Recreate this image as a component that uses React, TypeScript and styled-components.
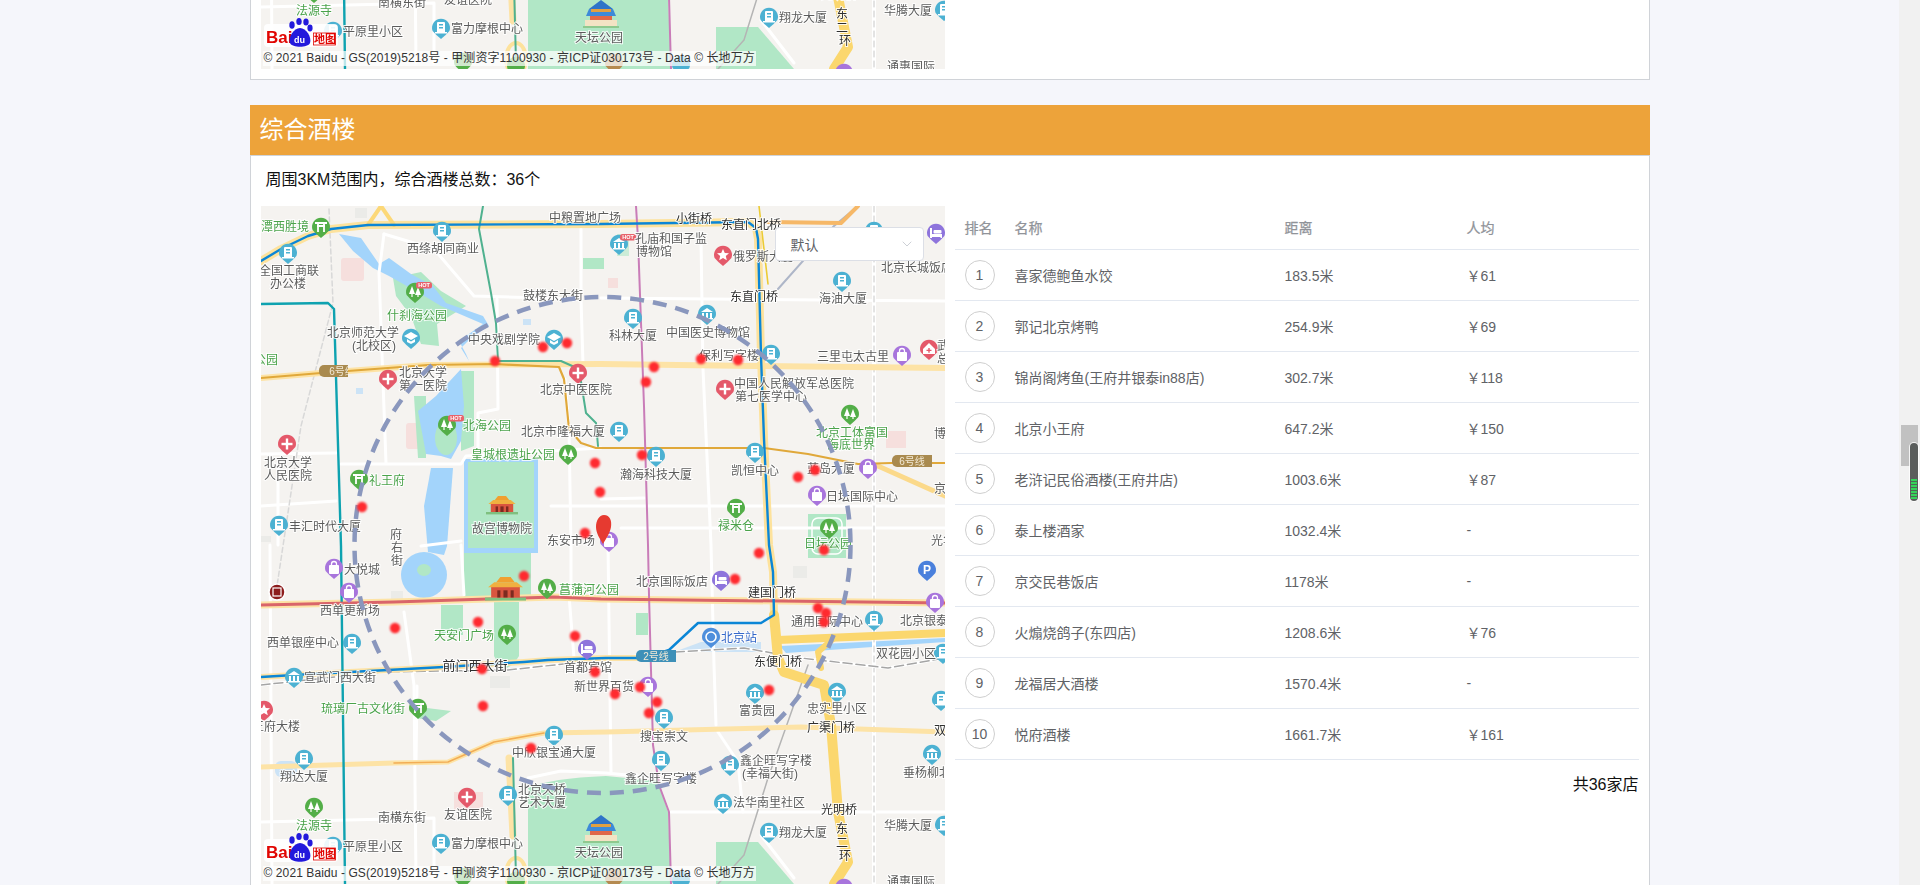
import React from "react";
import styled, { createGlobalStyle } from "styled-components";
import { ChevronDown } from "lucide-react";

const FONT = `"Liberation Sans", "Noto Sans CJK SC", sans-serif`;

const GlobalStyle = createGlobalStyle`
  html, body { margin: 0; padding: 0; height: 100%; overflow: hidden; background: #f5f6fb; }
  body { font-family: ${FONT}; }
`;

const Screen = styled.div`
  width: 1920px;
  height: 885px;
  display: flex;
  overflow: hidden;
  position: relative;
`;

const Content = styled.div`
  flex: 1;
  display: flex;
  flex-direction: column;
  align-items: center;
  min-width: 0;
`;

const Scrollbar = styled.div`
  width: 21px;
  flex: none;
  background: #f1f1f1;
  padding: 425px 2px 0;
  box-sizing: border-box;
`;

const ScrollThumb = styled.div`
  width: 17px;
  height: 41px;
  background: #c1c1c1;
`;

const MeterWidget = styled.div`
  position: absolute;
  left: 1910px;
  top: 443px;
  width: 8px;
  height: 58px;
  box-sizing: border-box;
  padding: 36px 1px 2px;
  border-radius: 4px;
  background: #5a5d5c;
  box-shadow: 0 0 0 1px rgba(255, 255, 255, 0.8);
`;

const MeterBars = styled.div`
  height: 100%;
  background: repeating-linear-gradient(#35d45a 0 2px, #4d6a55 2px 3px);
`;

const TopCard = styled.section`
  width: 1400px;
  height: 80px;
  box-sizing: border-box;
  flex: none;
  padding: 0 10px 10px;
  background: #fff;
  border: 1px solid #d0d3d8;
  border-top: 0;
  margin-bottom: 25px;
`;

const MapClip = styled.div`
  width: 684px;
  height: 69px;
  display: flex;
  flex-direction: column;
  justify-content: flex-end;
  overflow: hidden;
`;

const SectionTitle = styled.h2`
  width: 1400px;
  height: 50px;
  flex: none;
  margin: 0;
  padding-left: 10px;
  box-sizing: border-box;
  background: #eda33a;
  color: #fff;
  font-size: 24px;
  font-weight: 400;
  line-height: 50px;
`;

const Card = styled.section`
  width: 1400px;
  flex: none;
  box-sizing: border-box;
  padding: 0 10px 10px;
  background: #fff;
  border: 1px solid #d0d3d8;
`;

const Summary = styled.p`
  margin: 0;
  height: 50px;
  padding-left: 5px;
  font-size: 16px;
  line-height: 48px;
  color: #111;
`;

const Columns = styled.div`
  display: flex;
  gap: 10px;
  align-items: flex-start;
`;

const MapBox = styled.div`
  position: relative;
  width: 684px;
  height: 678px;
  flex: none;
  overflow: hidden;
  background: #f5f3f0;
`;

const MapSvg = styled.svg`
  display: block;
  width: 684px;
  height: 678px;
  font-family: ${FONT};
  filter: blur(0.3px);
`;

const Copyright = styled.div`
  position: absolute;
  left: 2px;
  bottom: 3px;
  padding: 0 1px;
  font-size: 12px;
  line-height: 15px;
  letter-spacing: 0.09px;
  color: #333;
  white-space: nowrap;
  background: rgba(255, 255, 255, 0.72);
`;

const SelectBox = styled.div`
  position: absolute;
  left: 514px;
  top: 21px;
  width: 149px;
  height: 34px;
  box-sizing: border-box;
  padding: 0 8px 0 15px;
  display: flex;
  align-items: center;
  justify-content: space-between;
  background: #fff;
  border: 1px solid #dcdfe6;
  border-radius: 4px;
  color: #606266;
  font-size: 14px;
`;

const TablePane = styled.div`
  flex: 1;
  min-width: 0;
`;

const RankTable = styled.table`
  width: 100%;
  border-collapse: collapse;
  table-layout: fixed;
  font-size: 14px;
  color: #606266;
`;

const HeadCell = styled.th<{ $width: number }>`
  width: ${(p) => p.$width}px;
  height: 43px;
  padding: 0 0 0 10px;
  box-sizing: border-box;
  text-align: left;
  font-weight: 400;
  color: #909399;
  -webkit-text-stroke: 0.25px #909399;
  border-bottom: 1px solid #e3e8f0;
`;

const Cell = styled.td`
  height: 51px;
  padding: 0 0 0 10px;
  box-sizing: border-box;
  border-bottom: 1px solid #e3e8f0;
`;

const RankBadge = styled.span`
  display: flex;
  width: 30px;
  height: 30px;
  box-sizing: border-box;
  align-items: center;
  justify-content: center;
  border: 1px solid #cfcfcf;
  border-radius: 50%;
`;

const TableFoot = styled.div`
  text-align: right;
  font-size: 16px;
  line-height: 20px;
  padding-top: 15px;
  color: #111;
`;

const LABEL_TONES = {
  grey: "#5b5b5b",
  road: "#2f2f2f",
  green: "#4aa24a",
  blue: "#3568c9",
};

const MapLabel = styled.text<{ $tone: keyof typeof LABEL_TONES; $size?: number }>`
  font-size: ${(p) => p.$size ?? 12}px;
  fill: ${(p) => LABEL_TONES[p.$tone]};
  stroke: rgba(255, 255, 255, 0.85);
  stroke-width: 2px;
  paint-order: stroke;
  dominant-baseline: central;
`;

const BadgeText = styled.text`
  font-size: 10px;
  fill: #f3ead6;
  text-anchor: middle;
  dominant-baseline: central;
`;

const HotText = styled.text`
  font-size: 5.5px;
  font-weight: 700;
  fill: #fff;
  text-anchor: middle;
  dominant-baseline: central;
`;

const PinText = styled.text`
  font-size: 12px;
  font-weight: 700;
  fill: #fff;
  text-anchor: middle;
  dominant-baseline: central;
`;

const Dot = styled.circle`
  fill: #ff2a2f;
  filter: blur(0.8px);
`;

const LogoRed = styled.text`
  font-size: 17px;
  font-weight: 700;
  fill: #e10602;
  stroke: #fff;
  stroke-width: 2px;
  paint-order: stroke;
`;

const LogoDu = styled.text`
  font-size: 9px;
  font-weight: 700;
  fill: #fff;
`;

const LogoMap = styled.text`
  font-size: 11px;
  font-weight: 700;
  fill: #e10602;
`;

type PinKind =
  | "building" | "museum" | "school" | "gate" | "tree" | "cross" | "star"
  | "home" | "bag" | "bed" | "park" | "plain" | "green" | "purple" | "brown";

const PIN_COLORS: Record<PinKind, string> = {
  building: "#4cb1d2",
  museum: "#4cb1d2",
  school: "#4cb1d2",
  plain: "#4cb1d2",
  gate: "#53ae48",
  tree: "#53ae48",
  park: "#53ae48",
  green: "#53ae48",
  cross: "#e4596a",
  star: "#e4596a",
  home: "#e4596a",
  bag: "#a875dc",
  bed: "#8e74dc",
  purple: "#a875dc",
  brown: "#b58a50",
};

const PinGlyph = ({ kind, x, y }: { kind: PinKind; x: number; y: number }) => {
  const t = `translate(${x} ${y})`;
  switch (kind) {
    case "building":
      return (
        <g transform={t} fill="#fff">
          <rect x={-4} y={-6} width={8} height={11} rx={1} />
          <rect x={-2} y={-4} width={4} height={1.5} fill="#4cb1d2" />
          <rect x={-2} y={-1} width={4} height={1.5} fill="#4cb1d2" />
          <rect x={-6} y={4} width={12} height={1.5} />
        </g>
      );
    case "museum":
      return (
        <g transform={t} fill="#fff">
          <path d="M-6 -2 L0 -6 L6 -2 Z" />
          <rect x={-5} y={-1} width={2} height={5} />
          <rect x={-1} y={-1} width={2} height={5} />
          <rect x={3} y={-1} width={2} height={5} />
          <rect x={-6} y={4} width={12} height={1.5} />
        </g>
      );
    case "school":
      return (
        <g transform={t} fill="#fff">
          <path d="M-7 -2 L0 -6 L7 -2 L0 2 Z" />
          <path d="M-4 1 L0 3.5 L4 1 L4 4 L0 6 L-4 4 Z" />
        </g>
      );
    case "gate":
      return (
        <g transform={t} fill="none" stroke="#fff" strokeWidth={1.8}>
          <path d="M-6 -4 H6 M-4 -1 H4 M-3 -4 V5 M3 -4 V5" />
        </g>
      );
    case "tree":
    case "park":
      return (
        <g transform={t} fill="#fff">
          <path d="M-3 -6 L0 2 H-6 Z" />
          <path d="M3 -5 L6 3 H0 Z" />
          <rect x={-3.6} y={2} width={1.2} height={3} />
          <rect x={2.4} y={3} width={1.2} height={2} />
        </g>
      );
    case "cross":
      return (
        <g transform={t} fill="#fff">
          <rect x={-5.5} y={-1.2} width={11} height={2.4} />
          <rect x={-1.2} y={-5.5} width={2.4} height={11} />
        </g>
      );
    case "star":
      return (
        <path
          transform={t}
          fill="#fff"
          d="M0 -6 L1.8 -2 L6 -1.7 L2.8 1 L3.8 5.2 L0 3 L-3.8 5.2 L-2.8 1 L-6 -1.7 L-1.8 -2 Z"
        />
      );
    case "home":
      return (
        <g transform={t}>
          <path fill="#fff" d="M-6 0 L0 -6 L6 0 V5 H-6 Z" />
          <path fill="#e4596a" d="M-2.5 0.7 H2.5 V2 H-2.5 Z M-0.7 -1 H0.7 V3.8 H-0.7 Z" />
        </g>
      );
    case "bag":
      return (
        <g transform={t}>
          <rect x={-5} y={-3} width={10} height={9} rx={1} fill="#fff" />
          <path d="M-2.5 -2 V-4 A2.5 2.5 0 0 1 2.5 -4 V-2" fill="none" stroke="#fff" strokeWidth={1.3} />
        </g>
      );
    case "bed":
      return (
        <g transform={t} fill="#fff">
          <rect x={-6} y={-5} width={2} height={10} />
          <rect x={-4} y={1} width={10} height={3} />
          <rect x={-2.5} y={-3} width={8} height={3.5} rx={1} />
          <rect x={4.5} y={3} width={1.5} height={2} />
        </g>
      );
    default:
      return null;
  }
};

const Pin = ({ kind, x, y, fill, hot }: { kind: PinKind; x: number; y: number; fill?: string; hot?: boolean }) => (
  <g>
    <path
      fill={fill ?? PIN_COLORS[kind]}
      d={`M${x - 8.4} ${y + 3} A9 9 0 1 1 ${x + 8.4} ${y + 3} Q${x + 5} ${y + 7} ${x} ${y + 11} Q${x - 5} ${y + 7} ${x - 8.4} ${y + 3} Z`}
    />
    <PinGlyph kind={kind} x={x} y={y} />
    {hot && (
      <g>
        <rect x={x + 1} y={y - 10} width={16} height={6.5} rx={2.5} fill="#e8626c" />
        <HotText x={x + 9} y={y - 6.6}>HOT</HotText>
      </g>
    )}
  </g>
);

const PINS: [PinKind, number, number, boolean?][] = [
  ["building", 27, 47], ["building", 181, 25], ["building", 18, 319], ["museum", 358, 38, true],
  ["building", 372, 112], ["museum", 446, 108], ["building", 510, 148], ["building", 581, 75],
  ["building", 358, 225], ["building", 395, 250], ["building", 494, 246], ["building", 613, 25],
  ["school", 150, 132], ["school", 293, 133],
  ["building", 91, 437], ["museum", 33, 471], ["building", 43, 553], ["building", 180, 637],
  ["building", 72, 640], ["building", 293, 529], ["building", 247, 589], ["building", 613, 414],
  ["building", 680, 494], ["museum", 494, 487], ["museum", 576, 486], ["building", 403, 512],
  ["building", 400, 554], ["building", 469, 559], ["museum", 671, 548], ["museum", 462, 597],
  ["building", 508, 626], ["building", 683, 619], ["building", 682, 447],
  ["green", 202, 671], ["plain", 420, 674], ["brown", 353, 672], ["purple", 583, 682], ["green", 255, 675],
  ["gate", 60, 21], ["tree", 154, 86, true], ["tree", 186, 219, true], ["park", 307, 248],
  ["gate", 98, 273], ["gate", 475, 302], ["park", 589, 208], ["park", 568, 322],
  ["park", 286, 382], ["park", 246, 428], ["gate", 157, 502], ["tree", 53, 601],
  ["cross", 127, 173], ["cross", 26, 238], ["cross", 317, 167], ["star", 462, 49],
  ["cross", 464, 183], ["home", 668, 143], ["cross", 206, 591], ["star", 3, 504],
  ["bed", 675, 27], ["bag", 641, 149], ["bag", 607, 262], ["bag", 556, 289], ["bag", 348, 335],
  ["bag", 73, 362], ["bag", 88, 386], ["bed", 326, 443], ["bed", 460, 374], ["bag", 674, 396],
  ["bag", 387, 480],
];

type Tone = keyof typeof LABEL_TONES;
type LabelRow = [string, number, number, Tone?, "start" | "middle" | "end"?, number?];

const LABELS: LabelRow[] = [
  ["潭西胜境", 24, 21, "green"], ["全国工商联", 28, 65], ["办公楼", 27, 78], ["西绦胡同商业", 182, 43],
  ["什刹海公园", 156, 110, "green"], ["北京师范大学", 102, 127], ["(北校区)", 113, 140],
  ["中央戏剧学院", 243, 134], ["鼓楼东大街", 292, 90], ["公园", 5, 154, "green"],
  ["北京大学", 162, 167], ["第一医院", 162, 180], ["北京中医医院", 315, 184],
  ["北海公园", 226, 220, "green"], ["北京市隆福大厦", 302, 226], ["皇城根遗址公园", 252, 249, "green"],
  ["北京大学", 27, 257], ["人民医院", 27, 270], ["礼王府", 126, 275, "green"],
  ["丰汇时代大厦", 64, 321], ["故宫博物院", 241, 323], ["府", 135, 329], ["右", 136, 342],
  ["街", 136, 355], ["东安市场", 310, 335],
  ["中粮置地广场", 324, 12], ["小街桥", 433, 13, "road"], ["东直门北桥", 490, 19, "road"],
  ["孔庙和国子监", 410, 33], ["博物馆", 393, 46], ["俄罗斯大厦", 472, 51, "grey", "start"],
  ["北京长城饭店", 620, 62, "grey", "start"], ["东直门桥", 493, 91, "road"], ["海油大厦", 582, 93],
  ["科林大厦", 372, 130], ["中国医史博物馆", 447, 127], ["保利写字楼", 468, 150],
  ["三里屯太古里", 592, 151], ["武警", 676, 140, "grey", "start"], ["总医院", 676, 153, "grey", "start"],
  ["中国人民解放军总医院", 533, 178], ["第七医学中心", 510, 191],
  ["北京工体富国", 591, 227, "green"], ["海底世界", 590, 239, "green"], ["博物馆", 673, 228, "grey", "start"],
  ["瀚海科技大厦", 395, 269], ["凯恒中心", 494, 265], ["蓝岛大厦", 570, 263],
  ["京广", 673, 283, "grey", "start"], ["日坛国际中心", 601, 291], ["禄米仓", 475, 320, "green"],
  ["日坛公园", 567, 338, "green"], ["光华", 670, 335, "grey", "start"],
  ["大悦城", 101, 364], ["西单更新场", 89, 405], ["菖蒲河公园", 328, 384, "green"],
  ["西单银座中心", 42, 437], ["天安门广场", 203, 430, "green"], ["前门西大街", 214, 459, "road", "middle", 13],
  ["首都宾馆", 327, 462], ["新世界百货", 343, 481], ["宣武门西大街", 79, 472],
  ["琉璃厂古文化街", 102, 503, "green"], ["王府大楼", 39, 521, "grey", "end"],
  ["中欣银宝通大厦", 293, 547], ["翔达大厦", 43, 571], ["北京天桥", 281, 584], ["艺术大厦", 281, 597],
  ["南横东街", 141, 612], ["友谊医院", 207, 609], ["法源寺", 53, 620, "green"],
  ["平原里小区", 112, 641], ["富力摩根中心", 226, 638], ["天坛公园", 338, 647],
  ["北京国际饭店", 411, 376], ["建国门桥", 511, 387, "road"], ["通用国际中心", 566, 416],
  ["北京银泰中心", 639, 415, "grey", "start"], ["北京站", 478, 432, "blue"], ["双花园小区", 645, 448],
  ["东便门桥", 517, 456, "road"], ["富贵园", 496, 505], ["忠实里小区", 576, 503], ["搜宝崇文", 403, 531],
  ["广渠门桥", 570, 522, "road"], ["双井", 673, 525, "road", "start"], ["鑫企旺写字楼", 515, 555],
  ["(幸福大街)", 509, 568], ["鑫企旺写字楼", 400, 573], ["垂杨柳北", 642, 567, "grey", "start"],
  ["法华南里社区", 508, 597], ["光明桥", 578, 604, "road"], ["华腾大厦", 647, 620],
  ["翔龙大厦", 542, 627], ["东", 581, 623, "road"], ["二", 581, 637, "road"], ["环", 584, 650, "road"],
  ["通惠国际", 650, 676],
];

const DOTS = [
  [282, 141], [306, 137], [234, 155], [101, 301], [334, 257], [339, 286], [324, 327],
  [393, 161], [385, 176], [440, 153],
  [477, 154], [381, 249], [554, 264], [537, 271], [263, 370], [134, 422], [217, 416],
  [314, 430], [221, 463], [334, 466], [222, 500], [270, 542], [498, 347], [563, 344],
  [474, 373], [557, 402], [565, 407], [563, 416], [379, 481], [354, 488], [396, 496],
  [388, 507], [508, 484],
];

const WHITE_ROADS = [
  "123,28 118,67 125,257", "123,28 173,43 213,90 320,93", "236,93 237,203 217,207 217,243",
  "320,23 320,93 322,158", "80,258 200,258 205,250 340,242", "0,248 75,247", "440,33 442,163 450,339 453,459 455,519",
  "340,92 684,95", "340,293 383,292", "360,322 684,322", "143,406 153,479 155,672",
  "0,616 173,612 173,672", "200,339 203,389", "308,389 313,452", "410,606 684,606",
  "457,526 477,556 482,606", "500,629 533,672", "267,572 300,565 345,567 397,572", "347,339 350,566",
  "0,300 75,295", "9,339 11,678", "17,257 17,339", "290,300 684,300",
  "304,173 308,223 310,340 310,389", "160,340 200,335", "155,556 156,480",
];

const Lines = {
  ring: "0,55 20,43 47,30 70,23 107,19 340,18 487,16 495,22 497,33 500,150 503,233 508,339 512,366 513,409",
  ringEast: "513,409 517,452 523,466 563,479 570,519 577,606 587,656 573,678",
  line2: "0,55 20,43 47,30 70,23 107,19 340,18 487,16 495,22 497,33 500,150 503,233 508,339 512,366 513,409 500,417 437,417 408,444 383,452 345,452 287,454 263,456 183,461 33,469 0,471",
  eastRoad: "517,434 684,427",
  line6: "0,172 60,167 167,159 233,158 298,161 303,173 308,223 320,237 335,242 503,242 547,248 597,258 630,257 684,257",
  pingan: "0,172 60,167 167,159 340,158 493,160 684,162",
  line5: "375,0 377,33 383,200 387,339 388,389 392,539 398,579 408,606 410,678",
  line8: "222,0 218,23 230,87 235,117 237,155 300,155 318,163 325,207 335,217 337,240",
  line8South: "252,552 255,672",
  line4: "0,98 67,97 73,103 80,340 84,678",
  line1: "0,399 133,396 293,391 340,393 684,397",
  guangqu: "0,561 133,557 187,556 233,536 283,527 345,526 540,521 684,526",
  guangquWest: "133,557 187,556 233,536 283,527",
  qianmen: "383,452 345,452 287,454 263,456 183,461 33,469 0,471",
  rail: "0,479 120,466 247,464 413,446 483,442 540,452 627,462 684,452",
  railNorth: "517,83 573,20 597,0",
  railSouth: "547,459 507,572 483,649 457,678",
  orange: "507,16 580,17 597,0",
  yellow: "498,0 507,78",
  east6: "607,260 617,260 684,290",
  ramp: "560,462 557,446 573,432",
};

const RoadLine = styled.polyline<{ $color: string; $width: number; $dash?: string }>`
  fill: none;
  stroke: ${(p) => p.$color};
  stroke-width: ${(p) => p.$width}px;
  stroke-linejoin: round;
  stroke-linecap: round;
  stroke-dasharray: ${(p) => p.$dash ?? "none"};
`;

const Palace = ({ x, y, w }: { x: number; y: number; w: number }) => (
  <g transform={`translate(${x} ${y}) scale(${w / 40})`}>
    <rect x={0} y={20} width={40} height={3} fill="#7fc07f" />
    <rect x={6} y={9} width={28} height={11} fill="#d9553f" />
    <path d="M3 10 L9 5 H31 L37 10 Z" fill="#f0b040" />
    <path d="M11 5 L15 0 H25 L29 5 Z" fill="#f0a030" />
    <rect x={12} y={13} width={3} height={7} fill="#7c2a20" />
    <rect x={18} y={13} width={4} height={7} fill="#7c2a20" />
    <rect x={25} y={13} width={3} height={7} fill="#7c2a20" />
  </g>
);

const TempleOfHeaven = ({ x, y }: { x: number; y: number }) => (
  <g transform={`translate(${x} ${y})`}>
    <path d="M0 -14 L-12 -5 H12 Z" fill="#2f74c8" />
    <path d="M-12 -5 H12 L15 2 H-15 Z" fill="#3d8ad8" />
    <rect x={-10} y={-5} width={20} height={3} fill="#e2a040" />
    <rect x={-11} y={2} width={22} height={4} fill="#e06848" />
    <rect x={-16} y={6} width={32} height={6} fill="#f3e3c4" />
    <rect x={-18} y={12} width={36} height={2} fill="#8fc98f" />
  </g>
);

const BaiduLogo = () => (
  <g>
    <rect x={3} y={633} width={74} height={23} rx={4} fill="#fff" opacity={0.9} />
    <LogoRed x={5} y={652}>Bai</LogoRed>
    <g fill="#2319dc">
      <ellipse cx={31} cy={634} rx={2.7} ry={3.8} />
      <ellipse cx={38} cy={630.5} rx={2.7} ry={3.6} />
      <ellipse cx={45} cy={631} rx={2.7} ry={3.6} />
      <ellipse cx={49} cy={637} rx={2.6} ry={3.4} />
      <path d="M39 637 C45 637 51 646 49 652 C47 657 31 657 29 652 C27 646 33 637 39 637 Z" />
    </g>
    <LogoDu x={33} y={652}>du</LogoDu>
    <rect x={52.5} y={642} width={22} height={12} fill="#fff" stroke="#e10602" strokeWidth={0.8} />
    <LogoMap x={53} y={652}>地图</LogoMap>
  </g>
);

const LineBadge = ({ x, y, w, fill, textX, children }: { x: number; y: number; w: number; fill: string; textX?: number; children: string }) => (
  <svg x={x} y={y - 6} width={w} height={12}>
    <rect width={w + 8} height={12} rx={5} fill={fill} />
    <BadgeText x={textX ?? w / 2} y={6}>{children}</BadgeText>
  </svg>
);

const BaiduMap = ({ visibleFrom = 0 }: { visibleFrom?: number }) => {
  const shown = (y: number) => y >= visibleFrom - 12;
  return (
    <MapBox>
      <MapSvg viewBox="0 0 684 678">
        <rect width={684} height={678} fill="#f5f3f0" />

        <g fill="#f6dfdd">
          <rect x={80} y={52} width={23} height={23} rx={3} />
          <rect x={145} y={217} width={18} height={26} rx={3} />
          <rect x={625} y={225} width={20} height={17} />
          <rect x={193} y={586} width={29} height={18} />
          <rect x={347} y={72} width={10} height={10} />
        </g>
        <g fill="#ebebe8">
          <rect x={94} y={2} width={12} height={10} />
          <rect x={0} y={330} width={10} height={6} />
          <rect x={532} y={360} width={14} height={12} />
          <rect x={229} y={470} width={20} height={12} />
          <rect x={130} y={385} width={12} height={12} />
        </g>

        <g fill="#b1e7c6">
          <path d="M132 72 L160 66 L180 85 L205 100 L176 118 L178 140 L160 138 L150 110 L135 90 Z" />
          <path d="M153 190 L165 190 L165 252 L157 252 Z" />
          <path d="M200 165 L213 165 L213 240 L200 245 Z" />
          <path d="M203 345 H270 V392 H203 Z" />
          <rect x={180} y={399} width={22} height={30} />
          <path d="M233 396 H258 V450 Q250 464 240 462 L233 450 Z" />
          <path d="M267 582 Q290 572 345 570 L397 575 L407 606 L410 678 H267 Z" />
          <path d="M455 636 H497 L533 678 H455 Z" />
          <rect x={322} y={52} width={21} height={11} />
          <rect x={375} y={407} width={12} height={22} />
          <rect x={547} y={308} width={38} height={44} />
          <path d="M150 500 L190 505 L175 515 L155 512 Z" />
          <rect x={356} y={28} width={12} height={22} opacity={0.6} />
        </g>

        <g fill="#a3d4fb">
          <path d="M78 28 L100 32 L118 58 L128 52 L150 68 L172 80 L185 97 L222 110 L228 120 L212 130 L200 142 L208 155 L205 148 L198 135 L222 118 L180 100 L160 88 L128 70 L112 62 L92 45 Z" />
          <path d="M175 190 L200 163 L203 200 L200 235 L190 253 L180 250 L165 248 L157 205 Z" />
          <path d="M170 262 L192 262 L186 340 L183 349 L167 346 L163 300 Z" />
          <ellipse cx={163} cy={369} rx={23} ry={23} />
          <rect x={203} y={253} width={74} height={94} />
          <rect x={205} y={339} width={27} height={6} opacity={0.6} />
          <path d="M457 436 H500 V446 H413 L440 436 Z" opacity={0.5} />
          <path d="M519 440 L684 432 V436 L525 447 Z" />
          <rect x={14} y={555} width={22} height={16} rx={6} opacity={0.5} />
          <rect x={95} y={182} width={7} height={6} opacity={0.5} />
          <rect x={262} y={113} width={8} height={6} opacity={0.5} />
        </g>
        <ellipse cx={185} cy={232} rx={11} ry={17} fill="#b1e7c6" />
        <ellipse cx={163} cy={364} rx={7} ry={6} fill="#b1e7c6" />
        <rect x={207} y={256} width={66} height={86} fill="#b1e7c6" />
        <rect x={551} y={312} width={30} height={36} rx={6} fill="none" stroke="#fff" strokeWidth={1.5} />

        {WHITE_ROADS.map((points) => (
          <RoadLine key={points} points={points} $color="#fff" $width={3} />
        ))}
        <RoadLine points="68,3 72,97 40,220 16,380" $color="#d8d8d8" $width={1.5} $dash="5 3" />
        <RoadLine points="613,0 613,678" $color="#fff" $width={4} />
        <RoadLine points="613,0 613,678" $color="#c8c8c8" $width={1} $dash="6 4" />

        <RoadLine points={Lines.rail} $color="#fff" $width={3} />
        <RoadLine points={Lines.rail} $color="#a5a5a5" $width={1.5} $dash="9 4" />
        <RoadLine points={Lines.railNorth} $color="#aeb6c8" $width={2} />
        <RoadLine points={Lines.railSouth} $color="#b4b4b4" $width={1.5} />

        <RoadLine points={Lines.guangqu} $color="#fde3a6" $width={5} />
        <RoadLine points={Lines.guangquWest} $color="#f2ad55" $width={1.6} />
        <RoadLine points={Lines.pingan} $color="#fde3a6" $width={6} />
        <RoadLine points={Lines.line1} $color="#fde3a6" $width={7} />
        <RoadLine points={Lines.qianmen} $color="#fde3a6" $width={6} />
        <RoadLine points={Lines.ring} $color="#fde29c" $width={8} />
        <RoadLine points={Lines.ringEast} $color="#fbd76e" $width={10} />
        <RoadLine points={Lines.eastRoad} $color="#fbd76e" $width={8} />
        <RoadLine points={Lines.ramp} $color="#fbd76e" $width={6} />
        <RoadLine points={Lines.east6} $color="#fbd98a" $width={5} />
        <RoadLine points={Lines.orange} $color="#f6b868" $width={4} />
        <RoadLine points="107,19 120,0 133,19" $color="#fcd878" $width={4} />
        <RoadLine points="248,552 252,630" $color="#fde3a6" $width={7} />
        <ellipse cx={255} cy={668} rx={10} ry={16} fill="none" stroke="#fde29c" strokeWidth={4} />
        <RoadLine points={Lines.yellow} $color="#eccb33" $width={1.6} />

        <RoadLine points={Lines.line6} $color="#e0a83a" $width={2.2} />
        <RoadLine points={Lines.line5} $color="#c97cb8" $width={2} />
        <RoadLine points={Lines.line8} $color="#4fb18f" $width={2} />
        <RoadLine points={Lines.line8South} $color="#4fb18f" $width={2} />
        <RoadLine points={Lines.line4} $color="#0ea2b0" $width={2.4} />
        <RoadLine points={Lines.line1} $color="#d9656a" $width={3} />
        <RoadLine points={Lines.line2} $color="#0b86d6" $width={2.4} />

        <Palace x={225} y={290} w={32} />
        <Palace x={224} y={371} w={41} />
        <TempleOfHeaven x={340} y={623} />

        <LineBadge x={58} y={165} w={29} fill="#a98a4f" textX={23}>6号线</LineBadge>
        <LineBadge x={631} y={255} w={40} fill="#a98a4f">6号线</LineBadge>
        <LineBadge x={375} y={450} w={40} fill="#3e90b8">2号线</LineBadge>

        {PINS.filter(([, , y]) => shown(y)).map(([kind, x, y, hot]) => (
          <Pin key={`${kind}-${x}-${y}`} kind={kind} x={x} y={y} hot={hot} />
        ))}
        <Pin kind="plain" x={450} y={431} fill="#4e8fdc" />
        <circle cx={450} cy={431} r={5} fill="none" stroke="#fff" strokeWidth={1.6} />
        <Pin kind="plain" x={666} y={364} fill="#4a80dc" />
        <PinText x={666} y={364}>P</PinText>
        <circle cx={16} cy={386} r={8} fill="#8c1c1c" stroke="#fff" strokeWidth={1.5} />
        <rect x={12} y={382} width={8} height={8} fill="none" stroke="#fff" strokeWidth={1.2} />

        {LABELS.filter(([, , y]) => shown(y)).map(([text, x, y, tone = "grey", anchor = "middle", size]) => (
          <MapLabel key={`${text}-${x}-${y}`} x={x} y={y} $tone={tone} $size={size} textAnchor={anchor}>
            {text}
          </MapLabel>
        ))}

        <circle
          cx={341.5}
          cy={339}
          r={248}
          fill="none"
          stroke="#8a97bd"
          strokeWidth={4.5}
          strokeDasharray="14 9"
        />
        {DOTS.filter(([, y]) => shown(y)).map(([x, y]) => (
          <Dot key={`${x}-${y}`} cx={x} cy={y} r={5.2} />
        ))}
        <path d="M343 309 C349 309 351 315 350 321 C349 327 345 333 342 338 C339 333 335 327 335 321 C335 315 338 309 343 309 Z" fill="#e63a30" />
        <BaiduLogo />
      </MapSvg>
      {visibleFrom === 0 && (
        <SelectBox>
          默认
          <ChevronDown size={16} strokeWidth={1.2} color="#c0c4cc" />
        </SelectBox>
      )}
      <Copyright>© 2021 Baidu - GS(2019)5218号 - 甲测资字1100930 - 京ICP证030173号 - Data © 长地万方</Copyright>
    </MapBox>
  );
};

type ShopRow = { name: string; distance: string; average: string };

const SHOPS: ShopRow[] = [
  { name: "喜家德鲍鱼水饺", distance: "183.5米", average: "￥61" },
  { name: "郭记北京烤鸭", distance: "254.9米", average: "￥69" },
  { name: "锦尚阁烤鱼(王府井银泰in88店)", distance: "302.7米", average: "￥118" },
  { name: "北京小王府", distance: "647.2米", average: "￥150" },
  { name: "老浒记民俗酒楼(王府井店)", distance: "1003.6米", average: "￥87" },
  { name: "泰上楼酒家", distance: "1032.4米", average: "-" },
  { name: "京交民巷饭店", distance: "1178米", average: "-" },
  { name: "火煽烧鸽子(东四店)", distance: "1208.6米", average: "￥76" },
  { name: "龙福居大酒楼", distance: "1570.4米", average: "-" },
  { name: "悦府酒楼", distance: "1661.7米", average: "￥161" },
];

const App: React.FC = () => (
  <Screen>
    <GlobalStyle />
    <Content>
      <TopCard>
        <MapClip>
          <BaiduMap visibleFrom={609} />
        </MapClip>
      </TopCard>
      <SectionTitle>综合酒楼</SectionTitle>
      <Card>
        <Summary>周围3KM范围内，综合酒楼总数：36个</Summary>
        <Columns>
          <BaiduMap />
          <TablePane>
            <RankTable>
              <thead>
                <tr>
                  <HeadCell $width={50}>排名</HeadCell>
                  <HeadCell $width={270}>名称</HeadCell>
                  <HeadCell $width={182}>距离</HeadCell>
                  <HeadCell $width={182}>人均</HeadCell>
                </tr>
              </thead>
              <tbody>
                {SHOPS.map((shop, index) => (
                  <tr key={shop.name}>
                    <Cell><RankBadge>{index + 1}</RankBadge></Cell>
                    <Cell>{shop.name}</Cell>
                    <Cell>{shop.distance}</Cell>
                    <Cell>{shop.average}</Cell>
                  </tr>
                ))}
              </tbody>
            </RankTable>
            <TableFoot>共36家店</TableFoot>
          </TablePane>
        </Columns>
      </Card>
    </Content>
    <Scrollbar>
      <ScrollThumb />
    </Scrollbar>
    <MeterWidget>
      <MeterBars />
    </MeterWidget>
  </Screen>
);

export default App;
